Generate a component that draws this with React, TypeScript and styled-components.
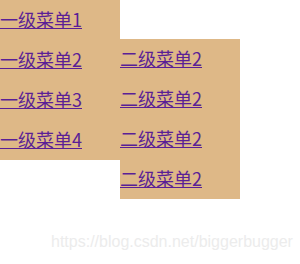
import React from "react";
import styled, { createGlobalStyle } from "styled-components";

const GlobalStyle = createGlobalStyle`
  html, body {
    margin: 0;
    padding: 0;
    background: #ffffff;
  }
  body {
    font-family: "Noto Sans CJK SC", "Liberation Sans", sans-serif;
  }
`;

const Page = styled.div`
  position: relative;
  width: 300px;
  height: 264px;
  overflow: hidden;
`;

const Menu = styled.ul`
  list-style: none;
  margin: 0;
  padding: 0;
  width: 120px;
  background-color: #deb887;
`;

const Item = styled.li`
  position: relative;
  height: 40px;
  line-height: 39px;
  font-size: 18px;
`;

const SubMenu = styled.ul`
  position: absolute;
  left: 100%;
  top: -1px;
  list-style: none;
  margin: 0;
  padding: 0;
  width: 120px;
  background-color: #deb887;
`;

const Link = styled.a`
  color: #5a1f96;
  text-decoration: underline;
`;

const Watermark = styled.div`
  position: absolute;
  left: 51px;
  top: 233px;
  font-family: "Liberation Sans", Arial, sans-serif;
  font-size: 16px;
  color: #ececec;
  white-space: nowrap;
`;

const firstLevel = ["一级菜单1", "一级菜单2", "一级菜单3", "一级菜单4"];
const secondLevel = ["二级菜单2", "二级菜单2", "二级菜单2", "二级菜单2"];

export default function App() {
  return (
    <Page>
      <GlobalStyle />
      <Menu>
        {firstLevel.map((label, i) => (
          <Item key={label}>
            <Link href="#">{label}</Link>
            {i === 1 && (
              <SubMenu>
                {secondLevel.map((sub, j) => (
                  <Item key={j}>
                    <Link href="#">{sub}</Link>
                  </Item>
                ))}
              </SubMenu>
            )}
          </Item>
        ))}
      </Menu>
      <Watermark>https://blog.csdn.net/biggerbugger</Watermark>
    </Page>
  );
}
